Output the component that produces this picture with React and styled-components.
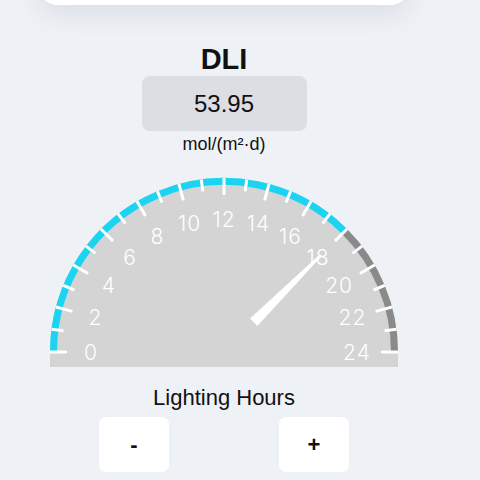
import React from "react";
import styled, { createGlobalStyle } from "styled-components";

const Global = createGlobalStyle`
  html, body { margin: 0; padding: 0; background: #eef1f6; overflow: hidden; }
  body { font-family: "Liberation Sans", Arial, sans-serif; color: #111; }
`;

const Page = styled.div`
  width: 448px;
  height: 480px;
  display: flex;
  flex-direction: column;
  align-items: center;
`;

const TopCard = styled.div`
  width: 372px;
  height: 40px;
  margin-top: -35px;
  background: #ffffff;
  border-radius: 22px;
  box-shadow: 0 8px 28px rgba(40, 50, 80, 0.10);
`;

const Title = styled.div`
  margin-top: 38px;
  font-size: 29px;
  line-height: 33px;
  font-weight: 700;
  color: #111;
`;

const ValueBox = styled.div`
  width: 165px;
  height: 55px;
  border-radius: 8px;
  background: #dcdee4;
  display: flex;
  align-items: center;
  justify-content: center;
  font-size: 24px;
  color: #111;
`;

const Unit = styled.div`
  margin-top: 3px;
  font-size: 18px;
  line-height: 20px;
  color: #111;
`;

const GaugeSvg = styled.svg`
  display: block;
  margin-top: 23px;
  overflow: visible;
`;

const Caption = styled.div`
  margin-top: 18px;
  font-size: 22px;
  line-height: 26px;
  color: #111;
`;

const ButtonRow = styled.div`
  margin-top: 6px;
  display: flex;
  gap: 110px;
`;

const StepButton = styled.button`
  width: 70px;
  height: 55px;
  border: none;
  border-radius: 7px;
  background: #ffffff;
  font-family: "Liberation Sans", Arial, sans-serif;
  font-size: 22px;
  font-weight: 700;
  color: #111;
  display: flex;
  align-items: center;
  justify-content: center;
  padding: 0;
`;

const CX = 174;
const CY = 175;
const R = 174;

const pt = (r, deg) => {
  const a = (deg * Math.PI) / 180;
  return [CX + r * Math.cos(a), CY - r * Math.sin(a)];
};

const arc = (r, fromDeg, toDeg) => {
  const [x1, y1] = pt(r, fromDeg);
  const [x2, y2] = pt(r, toDeg);
  return `M ${x1} ${y1} A ${r} ${r} 0 0 1 ${x2} ${y2}`;
};

function Gauge({ value }) {
  const angleOf = (v) => 180 - v * 7.5;
  const ticks = [];
  for (let v = 0; v <= 24; v++) {
    const major = v % 2 === 0;
    const [x1, y1] = pt(R, angleOf(v));
    const [x2, y2] = pt(major ? R - 17 : R - 12, angleOf(v));
    ticks.push(
      <line key={`t${v}`} x1={x1} y1={y1} x2={x2} y2={y2} stroke="#ffffff" strokeWidth="3" />
    );
  }
  const labels = [];
  for (let v = 0; v <= 24; v += 2) {
    const [x, y] = pt(133, angleOf(v));
    labels.push(
      <text
        key={`l${v}`}
        x={x}
        y={y}
        textAnchor="middle"
        dominantBaseline="central"
        fill="#ffffff"
        fontFamily="Inter, 'DejaVu Sans', sans-serif"
        fontWeight="300"
        fontSize="21"
        letterSpacing="1"
      >
        {v}
      </text>
    );
  }
  const na = angleOf(value);
  const rad = (na * Math.PI) / 180;
  const px = Math.sin(rad);
  const py = Math.cos(rad);
  const [bx, by] = pt(42, na);
  const [tx, ty] = pt(137, na);
  const bw = 5.2;
  const tw = 1.2;
  const needle = [
    [bx + px * bw, by + py * bw],
    [tx + px * tw, ty + py * tw],
    [tx - px * tw, ty - py * tw],
    [bx - px * bw, by - py * bw],
  ]
    .map((p) => p.join(","))
    .join(" ");

  return (
    <GaugeSvg width="348" height="190" viewBox="0 0 348 190">
      <path d={`M 0 ${CY} A ${R} ${R} 0 0 1 ${2 * CX} ${CY} L ${2 * CX} 190 L 0 190 Z`} fill="#d4d4d4" />
      <path d={arc(R - 3.5, 180, angleOf(value))} stroke="#1bd4f1" strokeWidth="7" fill="none" />
      <path d={arc(R - 3.5, angleOf(value), 0)} stroke="#8a8a8a" strokeWidth="7" fill="none" />
      {ticks}
      {labels}
      <polygon points={needle} fill="#ffffff" />
    </GaugeSvg>
  );
}

export default function App() {
  return (
    <>
      <Global />
      <Page>
        <TopCard />
        <Title>DLI</Title>
        <ValueBox>53.95</ValueBox>
        <Unit>mol/(m²·d)</Unit>
        <Gauge value={18} />
        <Caption>Lighting Hours</Caption>
        <ButtonRow>
          <StepButton>-</StepButton>
          <StepButton>+</StepButton>
        </ButtonRow>
      </Page>
    </>
  );
}
